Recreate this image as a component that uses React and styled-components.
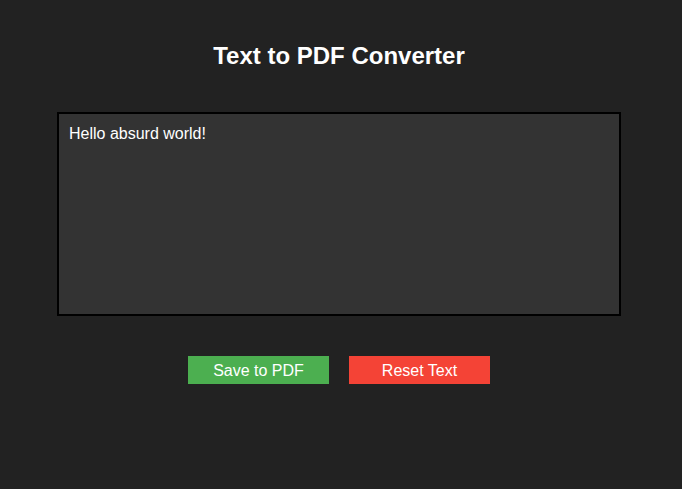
import styled, { createGlobalStyle } from "styled-components";

const Global = createGlobalStyle`
body {
  margin: 0;
  background: #222222;
  font-family: "Liberation Sans", Arial, sans-serif;
  color: #ffffff;
}
`

export default function App(){
    return(
        <Page>
            <Global/>
            <Title>Text to PDF Converter</Title>
            <TextBox defaultValue="Hello absurd world!"/>
            <Buttons>
                <Button $color="#4caf50">Save to PDF</Button>
                <Button $color="#f44336">Reset Text</Button>
            </Buttons>
        </Page>
    )
}

const Page = styled.div`
width: 678px;
min-height: 489px;
display: flex;
flex-direction: column;
align-items: center;
padding-top: 42px;
box-sizing: border-box;
`

const Title = styled.h1`
margin: 0;
font-size: 24px;
line-height: 28px;
font-weight: bold;
color: #ffffff;
`

const TextBox = styled.textarea`
margin-top: 42px;
width: 564px;
height: 204px;
box-sizing: border-box;
padding: 11px 10px 10px;
background: #333333;
color: #ffffff;
border: 2px solid #000000;
font-family: "Liberation Sans", Arial, sans-serif;
font-size: 16px;
resize: none;
outline: none;
`

const Buttons = styled.div`
display: flex;
gap: 20px;
margin-top: 40px;
`

const Button = styled.button`
width: 141px;
height: 28px;
border: none;
background: ${p => p.$color};
color: #ffffff;
font-family: "Liberation Sans", Arial, sans-serif;
font-size: 16px;
padding: 2px 0 0;
cursor: pointer;
`
